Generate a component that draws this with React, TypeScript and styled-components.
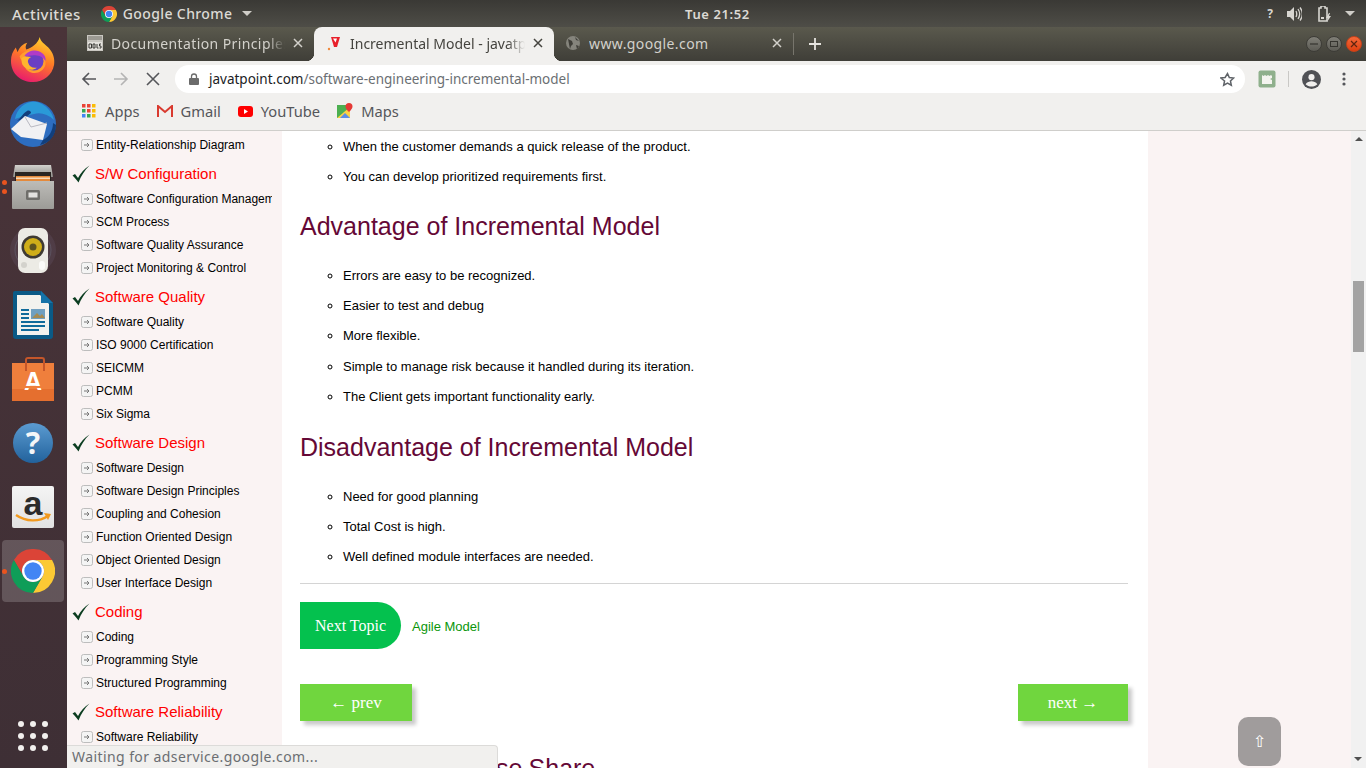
import React from "react";
import styled, { createGlobalStyle } from "styled-components";

const GlobalStyle = createGlobalStyle`
  html, body {
    margin: 0;
    padding: 0;
    height: 100%;
    overflow: hidden;
    background: #fff;
  }
  * {
    box-sizing: border-box;
  }
`;

const uiFont = `"Noto Sans", "Open Sans", sans-serif`;
const pageFont = `"Liberation Sans", Arial, sans-serif`;
const serifFont = `"Liberation Serif", "Times New Roman", serif`;

const Desktop = styled.div`
  width: 1366px;
  height: 768px;
  display: flex;
  flex-direction: column;
  overflow: hidden;
`;

const TopBar = styled.header`
  height: 27px;
  flex: none;
  display: grid;
  grid-template-columns: 1fr auto 1fr;
  align-items: center;
  padding: 0 11px 0 12px;
  background: linear-gradient(#3a3935, #4e4d47);
  color: #dcdad5;
  font: 500 14px ${uiFont};
`;

const TopLeft = styled.div`
  display: flex;
  align-items: center;
`;

const Activities = styled.span`
  font-size: 15px;
  letter-spacing: 0.4px;
`;

const TopAppName = styled.span`
  display: flex;
  align-items: center;
  gap: 6px;
  margin-left: 20px;
  letter-spacing: 0.4px;
`;

const Clock = styled.span`
  margin-left: 68px;
  font-weight: 600;
  font-size: 13px;
  letter-spacing: 0.6px;
`;

const TopRight = styled.div`
  display: flex;
  align-items: center;
  justify-content: flex-end;
  gap: 9px;
`;

const StatusGlyph = styled.span`
  width: 14px;
  text-align: center;
  font: 700 12px ${uiFont};
  color: #d8d6d1;
`;

const Caret = styled.span`
  width: 0;
  height: 0;
  margin-left: 4px;
  border-left: 5px solid transparent;
  border-right: 5px solid transparent;
  border-top: 5px solid #cfcdc8;
`;

const Workspace = styled.div`
  flex: 1;
  min-height: 0;
  display: flex;
`;

const Dock = styled.nav`
  width: 67px;
  flex: none;
  display: flex;
  flex-direction: column;
  background: linear-gradient(#4a3439, #3e2f35);
`;

const DockSlot = styled.div<{ $active?: boolean }>`
  width: 62px;
  height: ${(p) => (p.$active ? 62 : 64)}px;
  margin: ${(p) => (p.$active ? "1px 0 1px 2px" : "0 0 0 2px")};
  flex: none;
  display: flex;
  align-items: center;
  justify-content: center;
  border-radius: 4px;
  position: relative;
  background: ${(p) => (p.$active ? "rgba(255,255,255,0.18)" : "transparent")};
`;

const RunDot = styled.span<{ $top: number }>`
  position: absolute;
  left: 0;
  top: ${(p) => p.$top}px;
  width: 5px;
  height: 5px;
  border-radius: 50%;
  background: #e9541f;
`;

const HelpBadge = styled.div`
  width: 40px;
  height: 40px;
  display: flex;
  align-items: center;
  justify-content: center;
  border-radius: 50%;
  background: linear-gradient(#5b9bd1, #22629c);
  color: #f4f6f8;
  font: 700 30px/40px ${uiFont};
`;

const AmazonTile = styled.div`
  width: 42px;
  height: 42px;
  position: relative;
  display: flex;
  justify-content: center;
  border-radius: 2px;
  background: linear-gradient(#f4f4f4, #e2e2e2);
  color: #2b2b2b;
  font: 700 34px/34px ${pageFont};
`;

const AmazonSmile = styled.svg`
  position: absolute;
  left: 2px;
  bottom: 3px;
  width: 38px;
  height: 12px;
`;

const BagTile = styled.div`
  width: 42px;
  height: 44px;
  position: relative;
  display: flex;
  justify-content: center;
  align-items: flex-end;
  padding-bottom: 7px;
  background:
    linear-gradient(#ef7f3c, #ef7f3c) top 6px left 0 / 100% 26px no-repeat,
    linear-gradient(#e56f2f, #e56f2f) bottom / 100% 12px no-repeat;
  color: #fff;
  font: 700 25px/25px ${pageFont};
  &::before {
    content: "";
    position: absolute;
    left: 13px;
    top: 0;
    width: 16px;
    height: 12px;
    border: 2px solid #c4562a;
    border-bottom: none;
    border-radius: 3px 3px 0 0;
  }
  &::after {
    content: "";
    position: absolute;
    left: 11px;
    bottom: 13px;
    width: 20px;
    height: 2px;
    background: #ef7f3c;
  }
`;

const AppGrid = styled.div`
  margin: auto 0 17px 18px;
  width: 30px;
  display: grid;
  grid-template-columns: repeat(3, 6px);
  gap: 6px;
`;

const GridDot = styled.span`
  width: 6px;
  height: 6px;
  border-radius: 50%;
  background: #f2f0ee;
`;

const ChromeWindow = styled.main`
  flex: 1;
  min-width: 0;
  display: flex;
  flex-direction: column;
`;

const TabStrip = styled.div`
  height: 34px;
  flex: none;
  display: flex;
  align-items: stretch;
  background: linear-gradient(#5a594d, #3f3e38);
`;

const Tab = styled.div<{ $active?: boolean; $width: number; $left: number }>`
  width: ${(p) => p.$width}px;
  flex: none;
  display: flex;
  align-items: center;
  padding: 0 11px 2px ${(p) => p.$left}px;
  gap: 8px;
  font: 14px ${uiFont};
  letter-spacing: ${(p) => (p.$active ? "0" : "0.4px")};
  color: ${(p) => (p.$active ? "#45443f" : "#d3d1cb")};
  background: ${(p) => (p.$active ? "#f1f0ee" : "transparent")};
  border-radius: 8px 8px 0 0;
  position: relative;
  &::before,
  &::after {
    content: "";
    display: ${(p) => (p.$active ? "block" : "none")};
    position: absolute;
    bottom: 0;
    width: 8px;
    height: 8px;
  }
  &::before {
    left: -8px;
    background: radial-gradient(circle at 0 0, transparent 8px, #f1f0ee 8.5px);
  }
  &::after {
    right: -8px;
    background: radial-gradient(circle at 100% 0, transparent 8px, #f1f0ee 8.5px);
  }
`;

const TabTitle = styled.span<{ $fade?: boolean }>`
  flex: 1;
  min-width: 0;
  white-space: nowrap;
  overflow: hidden;
  ${(p) =>
    p.$fade
      ? `-webkit-mask-image: linear-gradient(90deg, #000 90%, transparent);
         mask-image: linear-gradient(90deg, #000 90%, transparent);`
      : ""}
`;

const TabClose = styled.svg`
  flex: none;
  width: 10px;
  height: 10px;
`;

const NewTab = styled.div`
  display: flex;
  align-items: center;
  padding-left: 15px;
  height: 22px;
  align-self: center;
  border-left: 1px solid #77756c;
`;

const WindowButtons = styled.div`
  margin-left: auto;
  margin-right: 4px;
  display: flex;
  align-items: center;
  gap: 4px;
`;

const WindowButton = styled.span<{ $close?: boolean }>`
  width: 16px;
  height: 16px;
  border-radius: 50%;
  display: flex;
  align-items: center;
  justify-content: center;
  background: ${(p) =>
    p.$close ? "linear-gradient(#f4693a, #dd3f10)" : "linear-gradient(#807f77, #5c5b54)"};
  border: 1px solid ${(p) => (p.$close ? "#c5421a" : "#3d3c37")};
`;

const Toolbar = styled.div`
  height: 34px;
  flex: none;
  display: flex;
  align-items: center;
  background: #f1f0ee;
  padding: 2px 0 0 12px;
`;

const NavIcon = styled.span`
  width: 20px;
  height: 20px;
  margin-right: 12px;
  display: flex;
  align-items: center;
  justify-content: center;
`;

const Omnibox = styled.div`
  width: 1070px;
  height: 28px;
  flex: none;
  display: flex;
  align-items: center;
  padding: 0 10px 0 14px;
  background: #fff;
  border-radius: 14px;
  font: 13.5px ${uiFont};
`;

const UrlHost = styled.span`
  color: #202124;
  margin-left: 10px;
`;

const UrlPath = styled.span`
  color: #6b6f73;
  flex: 1;
`;

const ToolbarEnd = styled.div`
  display: flex;
  align-items: center;
  margin-left: 13px;
`;

const ToolbarDivider = styled.span`
  width: 1px;
  height: 16px;
  margin: 0 13px 0 12px;
  background: #c9c8c5;
`;

const BookmarkBar = styled.div`
  height: 36px;
  flex: none;
  display: flex;
  align-items: center;
  padding: 0 0 3px 15px;
  gap: 17px;
  background: #f1f0ee;
  border-bottom: 1px solid #cfcecb;
  font: 14.7px ${uiFont};
  color: #55565a;
`;

const Bookmark = styled.span`
  display: flex;
  align-items: center;
  gap: 8px;
`;

const PageArea = styled.div`
  flex: 1;
  min-height: 0;
  display: flex;
  position: relative;
  overflow: hidden;
`;

const Sidebar = styled.aside`
  width: 215px;
  flex: none;
  background: #faf3f3;
  padding: 2px 10px 0 0;
  overflow: hidden;
  font-family: ${pageFont};
`;

const SideHeading = styled.div`
  height: 31px;
  padding: 4px 0 0 5px;
  display: flex;
  align-items: center;
  gap: 5px;
  color: #f00;
  font-size: 15px;
`;

const SideItem = styled.div`
  height: 23px;
  padding-left: 14px;
  display: flex;
  align-items: center;
  gap: 3px;
  color: #000;
  font-size: 12px;
  white-space: nowrap;
  overflow: hidden;
`;

const Content = styled.article`
  width: 866px;
  flex: none;
  background: #fff;
  padding: 1px 20px 0 18px;
  overflow: hidden;
  font-family: ${pageFont};
`;

const BulletList = styled.ul<{ $tight?: boolean }>`
  list-style: circle;
  margin: 0 0 ${(p) => (p.$tight ? "-1px" : "0")};
  padding: 0 0 0 43px;
`;

const BulletItem = styled.li`
  line-height: 30.2px;
  font-size: 13px;
  color: #000;
`;

const SectionTitle = styled.h2`
  margin: 0;
  height: 69.6px;
  padding-top: 20px;
  font-weight: 400;
  font-size: 25px;
  line-height: 30px;
  color: #650836;
`;

const Rule = styled.hr`
  margin: 11px 0 18px;
  border: none;
  border-top: 1px solid #d4d4d4;
`;

const NextTopicRow = styled.div`
  display: flex;
  align-items: center;
  gap: 11px;
`;

const NextTopicTag = styled.span`
  width: 101px;
  height: 47px;
  display: flex;
  align-items: center;
  justify-content: center;
  background: #04c14e;
  color: #fff;
  border-radius: 0 24px 24px 0;
  font: 16px ${serifFont};
`;

const TopicLink = styled.a`
  color: #0a960a;
  font-size: 13px;
  padding-top: 1px;
`;

const PagerRow = styled.div`
  display: flex;
  justify-content: space-between;
  margin-top: 35px;
`;

const PagerButton = styled.a<{ $width: number }>`
  width: ${(p) => p.$width}px;
  height: 37px;
  display: flex;
  align-items: center;
  justify-content: center;
  background: #70d63e;
  color: #fff;
  font: 17px ${serifFont};
  box-shadow: 4px 4px 4px #c9c9c9;
`;

const ShareTitle = styled.h2`
  margin: 32px 0 0;
  font-weight: 400;
  font-size: 25px;
  line-height: 30px;
  word-spacing: -0.7px;
  color: #650836;
`;

const RightRail = styled.aside`
  flex: 1;
  background: #faf3f3;
`;

const ScrollTrack = styled.div`
  width: 15px;
  flex: none;
  background: #f1f1f1;
  display: flex;
  flex-direction: column;
  align-items: center;
  padding-top: 6px;
`;

const ArrowUp = styled.span`
  width: 0;
  height: 0;
  border-left: 4px solid transparent;
  border-right: 4px solid transparent;
  border-bottom: 4px solid #505050;
`;

const ScrollThumb = styled.span`
  width: 11px;
  height: 71px;
  margin-top: 140px;
  background: #a3a3a3;
`;

const ArrowDown = styled.span`
  position: absolute;
  right: 4px;
  bottom: 7px;
  width: 0;
  height: 0;
  border-left: 4px solid transparent;
  border-right: 4px solid transparent;
  border-top: 4px solid #505050;
`;

const StatusBubble = styled.div`
  position: absolute;
  left: 0;
  bottom: 0;
  width: 431px;
  height: 23px;
  padding: 0 0 2px 5px;
  display: flex;
  align-items: center;
  background: #f1f0ee;
  border-top: 1px solid #dcdbd9;
  border-right: 1px solid #dcdbd9;
  border-top-right-radius: 4px;
  color: #6b6e72;
  font: 14px ${uiFont};
  letter-spacing: 0.42px;
`;

const BackToTop = styled.div`
  position: absolute;
  left: 1171px;
  bottom: 2px;
  width: 43px;
  height: 49px;
  display: flex;
  align-items: center;
  justify-content: center;
  background: #a09c9c;
  border-radius: 10px;
  color: #fff;
  font: 16px "DejaVu Sans", sans-serif;
`;

const ChromeLogo = ({ size }: { size: number }) => (
  <svg width={size} height={size} viewBox="0 0 48 48">
    <path d="M3.2 12A24 24 0 0 1 44.8 12L24 12A12 12 0 0 0 13.6 30Z" fill="#db4437" />
    <path d="M44.8 12A24 24 0 0 1 24 48L34.4 30A12 12 0 0 0 24 12Z" fill="#fcc934" />
    <path d="M24 48A24 24 0 0 1 3.2 12L13.6 30A12 12 0 0 0 34.4 30Z" fill="#0f9d58" />
    <circle cx="24" cy="24" r="12" fill="#fff" />
    <circle cx="24" cy="24" r="9.5" fill="#4285f4" />
  </svg>
);

const FirefoxLogo = () => (
  <svg width="46" height="48" viewBox="0 0 48 50">
    <defs>
      <linearGradient id="fxBody" x1="0.7" y1="0" x2="0.3" y2="1">
        <stop offset="0" stopColor="#ffd52e" />
        <stop offset="0.45" stopColor="#ff7a26" />
        <stop offset="1" stopColor="#e8186f" />
      </linearGradient>
    </defs>
    <path
      d="M31 2c1 5 5 7 9 11 5 5 7 12 6 18-2 11-11 18-22 18C11 49 1 40 1 27c0-6 2-10 5-14l2 5c2-6 6-9 10-10-2 3-2 5-1 7 6-2 12-6 14-13z"
      fill="url(#fxBody)"
    />
    <path d="M10 22c4-5 10-7 15-6 8 1 13 8 12 15-2 7-9 10-15 8-5-2-8-6-7-11-2 0-4-2-5-6z" fill="#ff9d2e" />
    <circle cx="25" cy="27" r="10" fill="#6a3fc4" />
    <path d="M15 22c3-5 10-7 15-5 5 2 8 6 7 10-3-5-8-6-12-6-4 0-7 1-10 1z" fill="#b13bc6" />
    <path d="M12 24c3-2 7-2 10-1-2 1-4 3-3 6 1 4 5 6 9 5-5 4-12 2-15-3-1-2-1-5-1-7z" fill="#ffb52e" />
  </svg>
);

const ThunderbirdLogo = () => (
  <svg width="48" height="48" viewBox="0 0 48 48">
    <circle cx="24" cy="25" r="23" fill="#2d6dc0" />
    <path d="M6 20C8 8 18 1 28 3c8 2 15 9 17 18-6-6-14-8-20-6-8 2-14 3-19 5z" fill="#2a9ad8" />
    <path d="M8 22c4-3 6-8 10-10 2-1 4 0 4 2l-6 5-8 3z" fill="#123f7c" />
    <path d="M2 30l14-13 22 8-4 16-22-3-10-8z" fill="#f1f1f3" />
    <path d="M16 18l6 10 16-4" fill="none" stroke="#b9b9c2" strokeWidth="1" />
    <path d="M34 41c6-3 10-9 10-17l3 2c0 10-6 18-16 20z" fill="#123f7c" />
  </svg>
);

const FilesLogo = () => (
  <svg width="42" height="44" viewBox="0 0 42 44">
    <defs>
      <linearGradient id="cab" x1="0" y1="0" x2="0" y2="1">
        <stop offset="0" stopColor="#d2d1cd" />
        <stop offset="1" stopColor="#8f8e8a" />
      </linearGradient>
      <linearGradient id="drawer" x1="0" y1="0" x2="0" y2="1">
        <stop offset="0" stopColor="#bdbcb8" />
        <stop offset="1" stopColor="#9c9b97" />
      </linearGradient>
    </defs>
    <path d="M3 0h36l2 12H1z" fill="url(#cab)" />
    <rect x="3" y="7" width="36" height="12" fill="#2a2522" />
    <rect x="4" y="11" width="34" height="7" fill="#e58a3c" />
    <rect x="4" y="12.500" width="34" height="1.500" fill="#f7d9b8" />
    <path d="M0 16h42v27a1 1 0 0 1-1 1H1a1 1 0 0 1-1-1z" fill="url(#drawer)" />
    <rect x="14" y="25" width="14" height="10" rx="1.500" fill="#6f6e6a" />
    <rect x="16.500" y="27.500" width="9" height="5" fill="#e3e2df" />
  </svg>
);

const SpeakerLogo = () => (
  <svg width="48" height="46" viewBox="0 0 48 46">
    <circle cx="24" cy="22" r="23" fill="#5b4a58" opacity="0.45" />
    <circle cx="24" cy="22" r="18" fill="none" stroke="#6a6a7c" strokeWidth="1" opacity="0.5" />
    <rect x="9" y="0" width="30" height="45" rx="7" fill="#ecebe5" />
    <circle cx="24" cy="19" r="11.500" fill="#3e3a33" />
    <circle cx="24" cy="19" r="9" fill="#cfae19" />
    <circle cx="24" cy="19" r="3.500" fill="#5d5320" />
    <circle cx="15" cy="37" r="3" fill="#d3d2cc" />
    <rect x="30" y="33" width="6" height="9" rx="3" fill="#fbfbf9" />
  </svg>
);

const WriterLogo = () => (
  <svg width="40" height="48" viewBox="0 0 40 48">
    <path d="M2 0h26l12 12v33a3 3 0 0 1-3 3H3a3 3 0 0 1-3-3V2a2 2 0 0 1 2-2z" fill="#0a5a86" />
    <path d="M4 4h23l9 9v31H4z" fill="#f2f2ee" />
    <path d="M28 0l12 12H28z" fill="#1473a8" />
    <rect x="8" y="18" width="8" height="2" fill="#0f6a9a" />
    <rect x="8" y="22" width="8" height="2" fill="#0f6a9a" />
    <rect x="8" y="26" width="8" height="2" fill="#0f6a9a" />
    <rect x="18" y="18" width="14" height="10" fill="#6f9fc0" />
    <path d="M19 27l5-5 3 3 2-2 3 4z" fill="#a58a52" />
    <rect x="8" y="30" width="24" height="2" fill="#0f6a9a" />
    <rect x="8" y="34" width="24" height="2" fill="#0f6a9a" />
    <rect x="8" y="38" width="18" height="2" fill="#0f6a9a" />
  </svg>
);

const dockApps = [
  { key: "firefox", icon: <FirefoxLogo /> },
  { key: "thunderbird", icon: <ThunderbirdLogo /> },
  { key: "files", icon: <FilesLogo />, dots: [25, 34] },
  { key: "rhythmbox", icon: <SpeakerLogo /> },
  { key: "writer", icon: <WriterLogo /> },
  { key: "software", icon: <BagTile>A</BagTile> },
  { key: "help", icon: <HelpBadge>?</HelpBadge> },
  {
    key: "amazon",
    icon: (
      <AmazonTile>
        a
        <AmazonSmile viewBox="0 0 38 12">
          <path d="M2 2c10 7 23 7 32 1" fill="none" stroke="#f29a1f" strokeWidth="2.400" />
          <path d="M30 0l7 1-3 6z" fill="#f29a1f" />
        </AmazonSmile>
      </AmazonTile>
    ),
  },
  { key: "chrome", icon: <ChromeLogo size={44} />, dots: [29], active: true },
];

const sidebar: { title?: string; items: string[] }[] = [
  { items: ["Entity-Relationship Diagram"] },
  {
    title: "S/W Configuration",
    items: [
      "Software Configuration Management",
      "SCM Process",
      "Software Quality Assurance",
      "Project Monitoring & Control",
    ],
  },
  {
    title: "Software Quality",
    items: ["Software Quality", "ISO 9000 Certification", "SEICMM", "PCMM", "Six Sigma"],
  },
  {
    title: "Software Design",
    items: [
      "Software Design",
      "Software Design Principles",
      "Coupling and Cohesion",
      "Function Oriented Design",
      "Object Oriented Design",
      "User Interface Design",
    ],
  },
  { title: "Coding", items: ["Coding", "Programming Style", "Structured Programming"] },
  { title: "Software Reliability", items: ["Software Reliability"] },
];

const CheckMark = () => (
  <svg width="18" height="18" viewBox="0 0 18 18" style={{ flex: "none" }}>
    <path d="M0.5 10.500l2.500-1.500 3 4C8.500 8 12 4 17.500 0.500 12.500 5.500 9 11 6.500 17.500 4.500 14.500 2.500 12.500 0.500 10.500z" fill="#0b3d20" />
  </svg>
);

const ItemArrow = () => (
  <svg width="12" height="12" viewBox="0 0 12 12" style={{ flex: "none" }}>
    <rect x="0.500" y="0.500" width="11" height="11" rx="2" fill="#f4f4f4" stroke="#bdbdbd" />
    <path d="M3 6h5M6 4l2 2-2 2" fill="none" stroke="#777" strokeWidth="1" />
  </svg>
);

const CloseGlyph = ({ color }: { color: string }) => (
  <TabClose viewBox="0 0 10 10">
    <path d="M1 1l8 8M9 1l-8 8" stroke={color} strokeWidth="1.500" />
  </TabClose>
);

const App = () => {
  return (
    <Desktop>
      <GlobalStyle />
      <TopBar>
        <TopLeft>
          <Activities>Activities</Activities>
          <TopAppName>
            <ChromeLogo size={16} />
            Google Chrome
            <Caret />
          </TopAppName>
        </TopLeft>
        <Clock>Tue 21:52</Clock>
        <TopRight>
          <StatusGlyph>?</StatusGlyph>
          <svg width="16" height="16" viewBox="0 0 16 16">
            <path d="M1 5h3l4-4v14l-4-4H1z" fill="#d8d6d1" />
            <path d="M10 5c1 2 1 4 0 6M12 3c2 3 2 7 0 10M14 1.500c3 4 3 9 0 13" fill="none" stroke="#d8d6d1" strokeWidth="1.300" />
          </svg>
          <svg width="16" height="16" viewBox="0 0 16 16" style={{ marginLeft: 5 }}>
            <path d="M3 2h2V0h4v2h2v13H3z" fill="none" stroke="#d8d6d1" strokeWidth="1.600" />
            <path d="M5 11h3v2H5z" fill="#d8d6d1" />
            <path d="M13 7l-3 5h2l-1 4 4-6h-2l1-3z" fill="#d8d6d1" />
          </svg>
          <Caret />
        </TopRight>
      </TopBar>
      <Workspace>
        <Dock>
          {dockApps.map((app) => (
            <DockSlot key={app.key} $active={app.active}>
              {app.dots?.map((top) => (
                <RunDot key={top} $top={top} />
              ))}
              {app.icon}
            </DockSlot>
          ))}
          <AppGrid>
            {Array.from({ length: 9 }, (_, i) => (
              <GridDot key={i} />
            ))}
          </AppGrid>
        </Dock>
        <ChromeWindow>
          <TabStrip>
            <Tab $width={247} $left={20}>
              <svg width="16" height="16" viewBox="0 0 16 16" style={{ flex: "none" }}>
                <rect width="16" height="16" fill="#c9c7c1" />
                <path d="M1 2h14M1 4h14" stroke="#6e6c64" strokeWidth="1" />
                <rect x="1" y="7" width="14" height="8" fill="#e4e2dd" />
                <path d="M2 9v4h2.500V9zM6 9v4h2V9zM10 9v4h1.500M14 9h-1.500v2h1.500v2h-1.500" fill="none" stroke="#3a3a36" strokeWidth="1" />
              </svg>
              <TabTitle $fade>Documentation Principles</TabTitle>
              <CloseGlyph color="#d3d1cb" />
            </Tab>
            <Tab $active $width={240} $left={12}>
              <svg width="16" height="16" viewBox="0 0 16 16" style={{ flex: "none" }}>
                <path d="M5 2h9l-3 10H8z" fill="#e8202a" />
                <path d="M7 3.500h4l-1.500 4z" fill="#fff" />
                <circle cx="3" cy="14" r="1.200" fill="#f08a3c" />
              </svg>
              <TabTitle $fade>Incremental Model - javatpoint</TabTitle>
              <CloseGlyph color="#45443f" />
            </Tab>
            <Tab $width={239} $left={11}>
              <svg width="16" height="16" viewBox="0 0 16 16" style={{ flex: "none" }}>
                <circle cx="8" cy="8" r="7" fill="#85847c" />
                <path d="M3 4l4 2 1 3-2 2-1 3M10 2l1 3 3 1M11 10l3 1-2 3z" fill="#3f3e38" />
              </svg>
              <TabTitle>www.google.com</TabTitle>
              <CloseGlyph color="#d3d1cb" />
            </Tab>
            <NewTab>
              <svg width="12" height="12" viewBox="0 0 12 12">
                <path d="M6 0v12M0 6h12" stroke="#e6e4df" strokeWidth="1.800" />
              </svg>
            </NewTab>
            <WindowButtons>
              <WindowButton>
                <svg width="10" height="10" viewBox="0 0 10 10">
                  <path d="M1 5h8" stroke="#35342f" strokeWidth="1.200" />
                </svg>
              </WindowButton>
              <WindowButton>
                <svg width="10" height="10" viewBox="0 0 10 10">
                  <rect x="1.500" y="2.500" width="7" height="5" fill="none" stroke="#35342f" />
                </svg>
              </WindowButton>
              <WindowButton $close>
                <svg width="10" height="10" viewBox="0 0 10 10">
                  <path d="M2 2l6 6M8 2l-6 6" stroke="#5c2410" strokeWidth="1.200" />
                </svg>
              </WindowButton>
            </WindowButtons>
          </TabStrip>
          <Toolbar>
            <NavIcon>
              <svg width="16" height="16" viewBox="0 0 16 16">
                <path d="M15 8H2M8 2L2 8l6 6" fill="none" stroke="#55565a" strokeWidth="1.600" />
              </svg>
            </NavIcon>
            <NavIcon>
              <svg width="16" height="16" viewBox="0 0 16 16">
                <path d="M1 8h13M8 2l6 6-6 6" fill="none" stroke="#b4b4b4" strokeWidth="1.600" />
              </svg>
            </NavIcon>
            <NavIcon>
              <svg width="14" height="14" viewBox="0 0 14 14">
                <path d="M1 1l12 12M13 1L1 13" stroke="#55565a" strokeWidth="1.600" />
              </svg>
            </NavIcon>
            <Omnibox>
              <svg width="10" height="12" viewBox="0 0 10 12" style={{ flex: "none" }}>
                <path d="M2.500 5V3.500a2.500 2.500 0 0 1 5 0V5" fill="none" stroke="#6b6b6b" strokeWidth="1.300" />
                <rect y="5" width="10" height="7" rx="1" fill="#6b6b6b" />
              </svg>
              <UrlHost>javatpoint.com</UrlHost>
              <UrlPath>/software-engineering-incremental-model</UrlPath>
              <svg width="15" height="15" viewBox="0 0 24 24">
                <path
                  d="M12 2.500l2.900 6.300 6.900.8-5.100 4.700 1.400 6.800-6.100-3.400-6.100 3.400 1.400-6.800L1.300 9.600l6.900-.8z"
                  fill="none"
                  stroke="#5f6368"
                  strokeWidth="2.400"
                />
              </svg>
            </Omnibox>
            <ToolbarEnd>
              <svg width="18" height="18" viewBox="0 0 18 18">
                <rect x="0.500" y="0.500" width="17" height="17" rx="2" fill="#8fb08c" />
                <path d="M4 5l1.500 1L7 5l1.500 1L10 5l1.500 1L13 5l1 1v2l-2 1 2 1v4H4z" fill="#f4f4ef" />
              </svg>
              <ToolbarDivider />
              <svg width="19" height="19" viewBox="0 0 20 20">
                <circle cx="10" cy="10" r="10" fill="#505155" />
                <circle cx="10" cy="7.500" r="3.200" fill="#f1f0ee" />
                <path d="M3.800 15c1.500-2.500 4-3.200 6.200-3.200s4.700.7 6.200 3.200c-3.200 3.300-9.200 3.300-12.400 0z" fill="#f1f0ee" />
              </svg>
              <svg width="4" height="14" viewBox="0 0 4 14" style={{ marginLeft: 21 }}>
                <circle cx="2" cy="2" r="1.600" fill="#55565a" />
                <circle cx="2" cy="7" r="1.600" fill="#55565a" />
                <circle cx="2" cy="12" r="1.600" fill="#55565a" />
              </svg>
            </ToolbarEnd>
          </Toolbar>
          <BookmarkBar>
            <Bookmark>
              <svg width="14" height="14" viewBox="0 0 14 14" style={{ marginRight: 1 }}>
                {["#ea4335", "#ea4335", "#fbbc05", "#34a853", "#ea4335", "#fbbc05", "#4285f4", "#34a853", "#fbbc05"].map(
                  (fill, i) => (
                    <rect key={i} x={(i % 3) * 5} y={Math.floor(i / 3) * 5} width="3.500" height="3.500" fill={fill} />
                  ),
                )}
              </svg>
              Apps
            </Bookmark>
            <Bookmark>
              <svg width="16" height="13" viewBox="0 0 16 13">
                <path d="M1 12V1l7 6 7-6v11" fill="none" stroke="#d93a2f" strokeWidth="2" />
              </svg>
              Gmail
            </Bookmark>
            <Bookmark>
              <svg width="15" height="11" viewBox="0 0 15 11">
                <rect width="15" height="11" rx="3" fill="#f00" />
                <path d="M6 3l4 2.500L6 8z" fill="#fff" />
              </svg>
              YouTube
            </Bookmark>
            <Bookmark>
              <svg width="16" height="16" viewBox="0 0 16 16">
                <rect y="2" width="13" height="13" fill="#4caf50" />
                <path d="M0 15L13 4v11z" fill="#fbd243" />
                <path d="M3 15l5-5 5 5z" fill="#5c8ee6" />
                <path d="M12 0a3.500 3.500 0 0 1 3.500 3.500C15.500 6 12 9 12 9S8.500 6 8.500 3.500A3.500 3.500 0 0 1 12 0z" fill="#e53935" />
              </svg>
              Maps
            </Bookmark>
          </BookmarkBar>
          <PageArea>
            <Sidebar>
              {sidebar.map((group, i) => (
                <div key={i}>
                  {group.title && (
                    <SideHeading>
                      <CheckMark />
                      {group.title}
                    </SideHeading>
                  )}
                  {group.items.map((item) => (
                    <SideItem key={item}>
                      <ItemArrow />
                      {item}
                    </SideItem>
                  ))}
                </div>
              ))}
            </Sidebar>
            <Content>
              <BulletList $tight>
                <BulletItem>When the customer demands a quick release of the product.</BulletItem>
                <BulletItem>You can develop prioritized requirements first.</BulletItem>
              </BulletList>
              <SectionTitle>Advantage of Incremental Model</SectionTitle>
              <BulletList>
                <BulletItem>Errors are easy to be recognized.</BulletItem>
                <BulletItem>Easier to test and debug</BulletItem>
                <BulletItem>More flexible.</BulletItem>
                <BulletItem>Simple to manage risk because it handled during its iteration.</BulletItem>
                <BulletItem>The Client gets important functionality early.</BulletItem>
              </BulletList>
              <SectionTitle>Disadvantage of Incremental Model</SectionTitle>
              <BulletList>
                <BulletItem>Need for good planning</BulletItem>
                <BulletItem>Total Cost is high.</BulletItem>
                <BulletItem>Well defined module interfaces are needed.</BulletItem>
              </BulletList>
              <Rule />
              <NextTopicRow>
                <NextTopicTag>Next Topic</NextTopicTag>
                <TopicLink>Agile Model</TopicLink>
              </NextTopicRow>
              <PagerRow>
                <PagerButton $width={112}>← prev</PagerButton>
                <PagerButton $width={110}>next →</PagerButton>
              </PagerRow>
              <ShareTitle>Help Others, Please Share</ShareTitle>
            </Content>
            <RightRail />
            <ScrollTrack>
              <ArrowUp />
              <ScrollThumb />
              <ArrowDown />
            </ScrollTrack>
            <StatusBubble>Waiting for adservice.google.com...</StatusBubble>
            <BackToTop>⇧</BackToTop>
          </PageArea>
        </ChromeWindow>
      </Workspace>
    </Desktop>
  );
};

export default App;
